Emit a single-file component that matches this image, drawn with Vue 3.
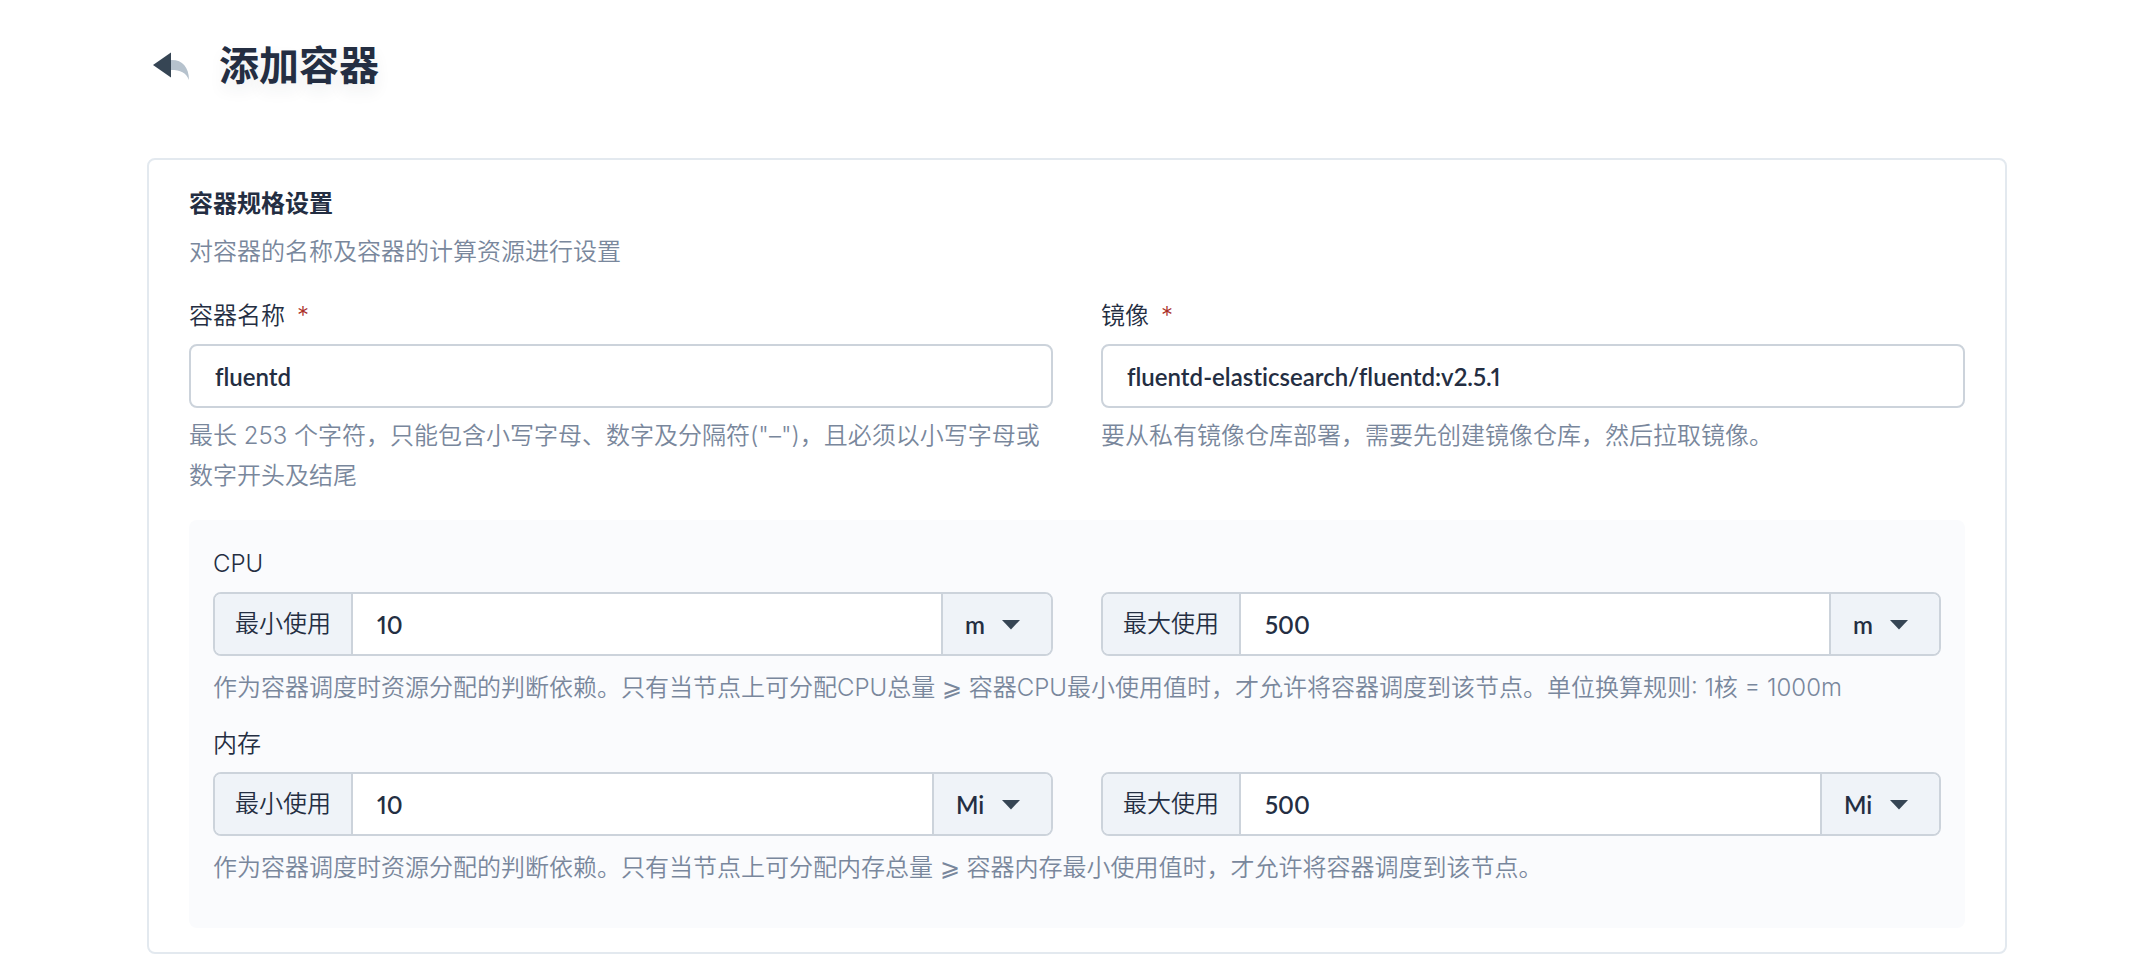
<script setup>
import { reactive } from 'vue'

const form = reactive({
  name: 'fluentd',
  image: 'fluentd-elasticsearch/fluentd:v2.5.1',
})

const resources = reactive([
  {
    id: 'cpu',
    label: 'CPU',
    unit: 'm',
    limits: [
      { id: 'cpu-min', label: '最小使用', value: '10' },
      { id: 'cpu-max', label: '最大使用', value: '500' },
    ],
    before: '作为容器调度时资源分配的判断依赖。只有当节点上可分配CPU总量',
    after: '容器CPU最小使用值时，才允许将容器调度到该节点。单位换算规则: 1核 = 1000m',
  },
  {
    id: 'memory',
    label: '内存',
    unit: 'Mi',
    limits: [
      { id: 'memory-min', label: '最小使用', value: '10' },
      { id: 'memory-max', label: '最大使用', value: '500' },
    ],
    before: '作为容器调度时资源分配的判断依赖。只有当节点上可分配内存总量',
    after: '容器内存最小使用值时，才允许将容器调度到该节点。',
  },
])
</script>

<template>
  <main class="page" lang="zh-CN">
    <header class="header">
      <button class="back" type="button" aria-label="返回">
        <svg width="40" height="40" viewBox="0 0 40 40" aria-hidden="true">
          <path d="M20 14C31 13.500 38 21 38 34C35 26.500 29.500 24 20 24Z" fill="#b6c2cd" />
          <path d="M2 19L20 6.500V31.500Z" fill="#364554" />
        </svg>
      </button>
      <h1 class="title">添加容器</h1>
    </header>

    <form class="card" @submit.prevent>
      <h2 class="card-title">容器规格设置</h2>
      <p class="card-desc">对容器的名称及容器的计算资源进行设置</p>

      <div class="columns">
        <div class="field">
          <label class="label" for="name">容器名称<span class="required">*</span></label>
          <input id="name" v-model="form.name" class="input" type="text" required />
          <p class="help">最长 253 个字符，只能包含小写字母、数字及分隔符("–")，且必须以小写字母或数字开头及结尾</p>
        </div>
        <div class="field">
          <label class="label" for="image">镜像<span class="required">*</span></label>
          <input id="image" v-model="form.image" class="input" type="text" required />
          <p class="help">要从私有镜像仓库部署，需要先创建镜像仓库，然后拉取镜像。</p>
        </div>
      </div>

      <div class="panel">
        <section v-for="item in resources" :key="item.id" class="resource">
          <h3 class="label">{{ item.label }}</h3>
          <div class="columns">
            <div v-for="limit in item.limits" :key="limit.id" class="group">
              <label class="prefix" :for="limit.id">{{ limit.label }}</label>
              <input :id="limit.id" v-model="limit.value" class="group-input" type="text" />
              <div class="unit">
                <select v-model="item.unit" class="select" :aria-label="limit.label + item.label">
                  <option :value="item.unit">{{ item.unit }}</option>
                </select>
                <svg class="caret" width="18" height="10" viewBox="0 0 18 10" aria-hidden="true">
                  <path d="M0 0H18L9 9.500Z" fill="#364554" />
                </svg>
              </div>
            </div>
          </div>
          <p class="help group-help">{{ item.before }} <span class="sign">⩾</span> {{ item.after }}</p>
        </section>
      </div>
    </form>
  </main>
</template>

<style>
body {
  margin: 0;
  background: #fff;
}
</style>

<style scoped>
.page {
  box-sizing: border-box;
  padding: 36px 123px 14px 147px;
  font-family: Inter, "Noto Sans CJK SC", sans-serif;
  font-size: 24px;
  font-weight: 350;
  line-height: 40px;
  color: #242e42;
}

h1,
h2,
h3,
p {
  margin: 0;
}

.header {
  display: flex;
  align-items: center;
  gap: 28px;
  height: 60px;
  margin-bottom: 62px;
  padding-left: 4px;
}

.back {
  display: flex;
  padding: 0;
  border: 0;
  background: none;
  cursor: pointer;
}

.title {
  font-size: 40px;
  font-weight: 600;
  line-height: 60px;
  text-shadow: 0 8px 16px rgba(36, 46, 66, 0.08);
}

.card {
  padding: 24px 40px;
  border: 2px solid #e3e9ef;
  border-radius: 8px;
}

.card-title {
  font-size: 24px;
  font-weight: 600;
}

.card-desc {
  margin-top: 8px;
  margin-bottom: 24px;
  color: #79879c;
}

.columns {
  display: grid;
  grid-template-columns: repeat(2, minmax(0, 1fr));
  gap: 48px;
}

.label {
  display: block;
  margin-bottom: 8px;
  font-size: 24px;
  font-weight: 350;
}

.required {
  margin-left: 12px;
  color: #ab2f29;
}

.input {
  box-sizing: border-box;
  display: block;
  width: 100%;
  height: 64px;
  padding: 0 24px;
  border: 2px solid #ccd3db;
  border-radius: 8px;
  background: #fff;
}

.input,
.group-input,
.select {
  font-family: Lato, "Noto Sans CJK SC", sans-serif;
  font-size: 24px;
  font-weight: 600;
  font-variant-ligatures: none;
  font-variant-numeric: proportional-nums;
  color: #242e42;
  outline: none;
}

.help {
  margin-top: 8px;
  color: #79879c;
}

.sign {
  font-family: "DejaVu Sans Light", "DejaVu Sans", sans-serif;
  font-size: 24px;
  font-weight: 200;
  line-height: 1;
}

.panel {
  display: flex;
  flex-direction: column;
  gap: 16px;
  margin-top: 24px;
  padding: 24px 24px 40px;
  border-radius: 8px;
  background: #fafbfd;
}

.group {
  box-sizing: border-box;
  display: flex;
  height: 64px;
  overflow: hidden;
  border: 2px solid #ccd3db;
  border-radius: 8px;
  background: #fff;
}

.prefix {
  padding: 0 20px;
  border-right: 2px solid #ccd3db;
  background: #eff3f8;
  line-height: 60px;
  white-space: nowrap;
}

.group-input {
  flex: 1;
  min-width: 0;
  padding: 0 24px;
  border: 0;
  background: none;
}

.unit {
  position: relative;
  display: flex;
  border-left: 2px solid #ccd3db;
  background: #eff3f8;
}

.select {
  appearance: none;
  padding: 0 66px 0 22px;
  border: 0;
  background: none;
}

.caret {
  position: absolute;
  top: 26px;
  right: 31px;
  pointer-events: none;
}

.group-help {
  margin-top: 12px;
}
</style>
